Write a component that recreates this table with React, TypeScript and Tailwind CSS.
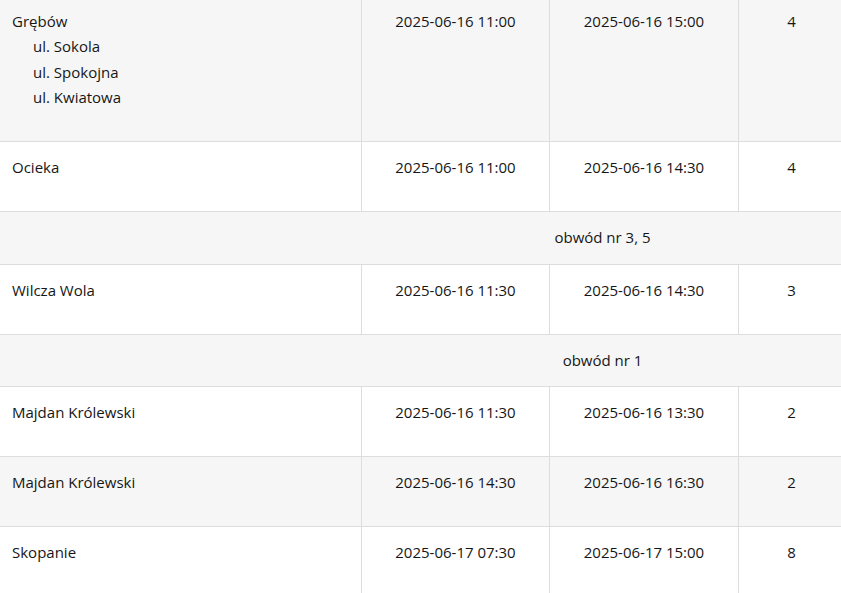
type Row =
  | { kind: "data"; place: string; streets?: string[]; from: string; to: string; hours: string }
  | { kind: "group"; label: string };

const rows: Row[] = [
  {
    kind: "data",
    place: "Grębów",
    streets: ["ul. Sokola", "ul. Spokojna", "ul. Kwiatowa"],
    from: "2025-06-16 11:00",
    to: "2025-06-16 15:00",
    hours: "4",
  },
  { kind: "data", place: "Ocieka", from: "2025-06-16 11:00", to: "2025-06-16 14:30", hours: "4" },
  { kind: "group", label: "obwód nr 3, 5" },
  { kind: "data", place: "Wilcza Wola", from: "2025-06-16 11:30", to: "2025-06-16 14:30", hours: "3" },
  { kind: "group", label: "obwód nr 1" },
  { kind: "data", place: "Majdan Królewski", from: "2025-06-16 11:30", to: "2025-06-16 13:30", hours: "2" },
  { kind: "data", place: "Majdan Królewski", from: "2025-06-16 14:30", to: "2025-06-16 16:30", hours: "2" },
  { kind: "data", place: "Skopanie", from: "2025-06-17 07:30", to: "2025-06-17 15:00", hours: "8" },
];

export default function App() {
  return (
    <div className="h-[593px] w-[841px] overflow-hidden bg-white">
      <div
        className="-mt-[4.5px] w-[844px] text-[15px] leading-[25.5px] text-[#161616]"
        style={{ fontFamily: '"Open Sans", "Noto Sans", sans-serif' }}
      >
        {rows.map((row, i) => {
          const bg = i % 2 === 0 ? "bg-[#f6f6f6]" : "bg-white";
          if (row.kind === "group") {
            return (
              <div key={i} className={`grid grid-cols-[361px_483px] border-b border-[#dddddd] ${bg}`}>
                <div />
                <div className="py-[13px] text-center">{row.label}</div>
              </div>
            );
          }
          return (
            <div
              key={i}
              className={`grid grid-cols-[361px_188px_189px_106px] border-b border-[#dddddd] ${bg}`}
            >
              <div className="pl-3 pt-[13px] pb-[30.5px]">
                <div>{row.place}</div>
                {row.streets?.map((s) => (
                  <div key={s} className="pl-[21px]">
                    {s}
                  </div>
                ))}
              </div>
              <div className="border-l border-[#dddddd] pt-[13px] text-center">{row.from}</div>
              <div className="border-l border-[#dddddd] pt-[13px] text-center">{row.to}</div>
              <div className="border-l border-[#dddddd] pt-[13px] text-center">{row.hours}</div>
            </div>
          );
        })}
      </div>
    </div>
  );
}
